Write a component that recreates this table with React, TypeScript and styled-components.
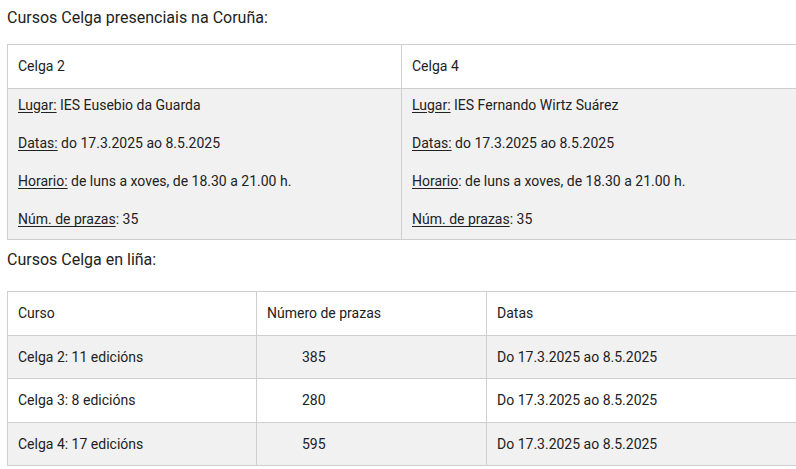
import * as React from "react";
import styled, { createGlobalStyle } from "styled-components";

const GlobalStyle = createGlobalStyle`
  html, body {
    margin: 0;
    padding: 0;
    overflow: hidden;
    background: #ffffff;
  }
  body {
    font-family: Roboto, "Liberation Sans", Arial, sans-serif;
    color: #222222;
  }
`;

type Place = {
  title: string;
  lugar: string;
  horarioColon: boolean;
};

const places: Place[] = [
  { title: "Celga 2", lugar: "IES Eusebio da Guarda", horarioColon: true },
  { title: "Celga 4", lugar: "IES Fernando Wirtz Suárez", horarioColon: false },
];

const online = [
  { curso: "Celga 2: 11 edicións", prazas: "385" },
  { curso: "Celga 3: 8 edicións", prazas: "280" },
  { curso: "Celga 4: 17 edicións", prazas: "595" },
];

const App = () => {
  return (
    <>
      <GlobalStyle />
      <Page>
        <Heading $top={8} $bottom={16}>
          Cursos Celga presenciais na Coruña:
        </Heading>
        <Table>
          <colgroup>
            <col style={{ width: 394 }} />
            <col />
          </colgroup>
          <tbody>
            <Row>
              {places.map((p) => (
                <Cell key={p.title}>{p.title}</Cell>
              ))}
            </Row>
            <Row $shade>
              {places.map((p) => (
                <InfoCell key={p.title}>
                  <Line>
                    <U>Lugar:</U> {p.lugar}
                  </Line>
                  <Line>
                    <U>Datas:</U> do 17.3.2025 ao 8.5.2025
                  </Line>
                  <Line>
                    {p.horarioColon ? (
                      <U>Horario:</U>
                    ) : (
                      <>
                        <U>Horario</U>:
                      </>
                    )}{" "}
                    de luns a xoves, de 18.30 a 21.00 h.
                  </Line>
                  <Line>
                    <U>Núm. de prazas</U>: 35
                  </Line>
                </InfoCell>
              ))}
            </Row>
          </tbody>
        </Table>
        <Heading $top={10} $bottom={21}>
          Cursos Celga en liña:
        </Heading>
        <Table>
          <colgroup>
            <col style={{ width: 249 }} />
            <col style={{ width: 230 }} />
            <col />
          </colgroup>
          <tbody>
            <Row>
              <Cell>Curso</Cell>
              <Cell>Número de prazas</Cell>
              <Cell>Datas</Cell>
            </Row>
            {online.map((r, i) => (
              <Row key={r.curso} $shade={i % 2 === 0}>
                <Cell>{r.curso}</Cell>
                <Cell $indent>{r.prazas}</Cell>
                <Cell>Do 17.3.2025 ao 8.5.2025</Cell>
              </Row>
            ))}
          </tbody>
        </Table>
      </Page>
    </>
  );
};

const Page = styled.div`
  padding-left: 7px;
  width: 820px;
`;

const Heading = styled.p<{ $top: number; $bottom: number }>`
  margin: ${(p) => p.$top}px 0 ${(p) => p.$bottom}px;
  font-size: 16px;
  line-height: 20px;
  color: #222222;
`;

const Table = styled.table`
  width: 800px;
  border-collapse: collapse;
  table-layout: fixed;
  font-size: 14px;
  line-height: 20px;
`;

const Row = styled.tr<{ $shade?: boolean }>`
  background: ${(p) => (p.$shade ? "#f1f1f1" : "#ffffff")};
`;

const Cell = styled.td<{ $indent?: boolean }>`
  border: 1px solid #cfcfcf;
  padding: 11px 10px 11.5px ${(p) => (p.$indent ? "45px" : "10px")};
  vertical-align: middle;
  text-align: left;
`;

const InfoCell = styled.td`
  border: 1px solid #cfcfcf;
  padding: 6px 10px 10px;
  vertical-align: top;
`;

const Line = styled.p`
  margin: 0 0 18.33px;
  &:last-child {
    margin-bottom: 0;
  }
`;

const U = styled.span`
  text-decoration: underline;
  text-underline-offset: 2px;
`;

export default App;
